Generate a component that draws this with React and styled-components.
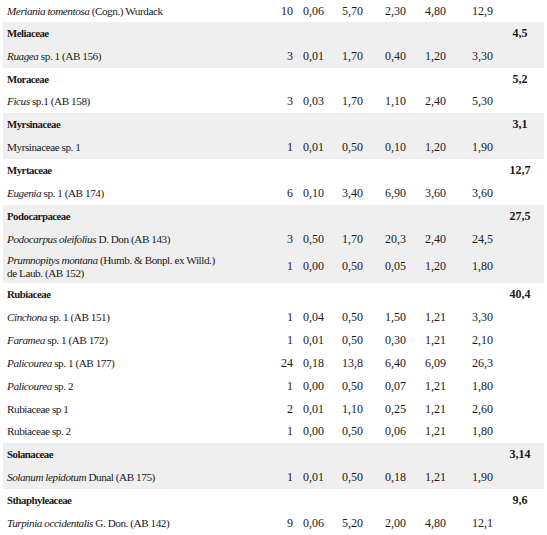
import styled, { createGlobalStyle } from 'styled-components';

const Global = createGlobalStyle`
  html, body { margin: 0; padding: 0; background: #ffffff; }
  body { font-family: "Liberation Serif", serif; color: #1a1a1a; }
`;

const data = [
  { family: 'Meliaceae', total: '4,5', rows: [
    { it: 'Ruagea', rest: ' sp. 1 (AB 156)', v: ['3', '0,01', '1,70', '0,40', '1,20', '3,30'] },
  ]},
  { family: 'Moraceae', total: '5,2', rows: [
    { it: 'Ficus', rest: ' sp.1 (AB 158)', v: ['3', '0,03', '1,70', '1,10', '2,40', '5,30'] },
  ]},
  { family: 'Myrsinaceae', total: '3,1', rows: [
    { it: '', rest: 'Myrsinaceae sp. 1', v: ['1', '0,01', '0,50', '0,10', '1,20', '1,90'] },
  ]},
  { family: 'Myrtaceae', total: '12,7', rows: [
    { it: 'Eugenia', rest: ' sp. 1 (AB 174)', v: ['6', '0,10', '3,40', '6,90', '3,60', '3,60'] },
  ]},
  { family: 'Podocarpaceae', total: '27,5', rows: [
    { it: 'Podocarpus oleifolius', rest: ' D. Don (AB 143)', v: ['3', '0,50', '1,70', '20,3', '2,40', '24,5'] },
    { it: 'Prumnopitys montana', rest: ' (Humb. & Bonpl. ex Willd.)', line2: 'de Laub. (AB 152)', v: ['1', '0,00', '0,50', '0,05', '1,20', '1,80'] },
  ]},
  { family: 'Rubiaceae', total: '40,4', rows: [
    { it: 'Cinchona', rest: ' sp. 1 (AB 151)', v: ['1', '0,04', '0,50', '1,50', '1,21', '3,30'] },
    { it: 'Faramea', rest: ' sp. 1 (AB 172)', v: ['1', '0,01', '0,50', '0,30', '1,21', '2,10'] },
    { it: 'Palicourea', rest: ' sp. 1 (AB 177)', v: ['24', '0,18', '13,8', '6,40', '6,09', '26,3'] },
    { it: 'Palicourea', rest: ' sp. 2', v: ['1', '0,00', '0,50', '0,07', '1,21', '1,80'] },
    { it: '', rest: 'Rubiaceae sp 1', v: ['2', '0,01', '1,10', '0,25', '1,21', '2,60'] },
    { it: '', rest: 'Rubiaceae sp. 2', v: ['1', '0,00', '0,50', '0,06', '1,21', '1,80'] },
  ]},
  { family: 'Solanaceae', total: '3,14', rows: [
    { it: 'Solanum lepidotum', rest: ' Dunal (AB 175)', v: ['1', '0,01', '0,50', '0,18', '1,21', '1,90'] },
  ]},
  { family: 'Sthaphyleaceae', total: '9,6', rows: [
    { it: 'Turpinia occidentalis', rest: ' G. Don. (AB 142)', v: ['9', '0,06', '5,20', '2,00', '4,80', '12,1'] },
  ]},
];

const Table = styled.div`
  width: 541px;
  margin-left: 3px;
  font-family: "Liberation Serif", "Times New Roman", Times, serif;
  font-size: 12px;
`;

const Group = styled.div`
  background: ${p => (p.$shaded ? '#efefef' : '#ffffff')};
`;

const Row = styled.div`
  display: grid;
  grid-template-columns: 268px 22px 49px 43px 40px 47px 30px 36px;
  align-items: center;
  height: ${p => (p.$tall ? '33px' : '22.85px')};
  line-height: 13px;
`;

const FirstRow = styled(Row)`
  height: 22px;
`;

const Name = styled.div`
  padding-left: 4px;
  font-size: 11.2px;
  letter-spacing: -0.45px;
  white-space: nowrap;
`;

const FamilyName = styled(Name)`
  font-weight: 700;
  font-size: 10.8px;
  letter-spacing: -0.5px;
`;

const Num = styled.div`
  text-align: ${p => p.$align || 'left'};
  padding-left: ${p => p.$pad || 0}px;
`;

const Total = styled(Num)`
  text-align: center;
  font-weight: 700;
`;

function Values({ v }) {
  return (
    <>
      <Num $align="right">{v[0]}</Num>
      <Num $pad={10}>{v[1]}</Num>
      <Num>{v[2]}</Num>
      <Num>{v[3]}</Num>
      <Num>{v[4]}</Num>
      <Num>{v[5]}</Num>
      <Num />
    </>
  );
}

function Species({ r }) {
  return (
    <Row $tall={!!r.line2}>
      <Name>
        {r.it && <i>{r.it}</i>}{r.rest}
        {r.line2 && <><br />{r.line2}</>}
      </Name>
      <Values v={r.v} />
    </Row>
  );
}

export default function App() {
  return (
    <>
      <Global />
      <Table>
        <FirstRow>
          <Name><i>Meriania tomentosa</i> (Cogn.) Wurdack</Name>
          <Values v={['10', '0,06', '5,70', '2,30', '4,80', '12,9']} />
        </FirstRow>
        {data.map((g, i) => (
          <Group key={g.family} $shaded={i % 2 === 0}>
            <Row>
              <FamilyName>{g.family}</FamilyName>
              <Num /><Num /><Num /><Num /><Num /><Num />
              <Total>{g.total}</Total>
            </Row>
            {g.rows.map((r, j) => <Species key={j} r={r} />)}
          </Group>
        ))}
      </Table>
    </>
  );
}
